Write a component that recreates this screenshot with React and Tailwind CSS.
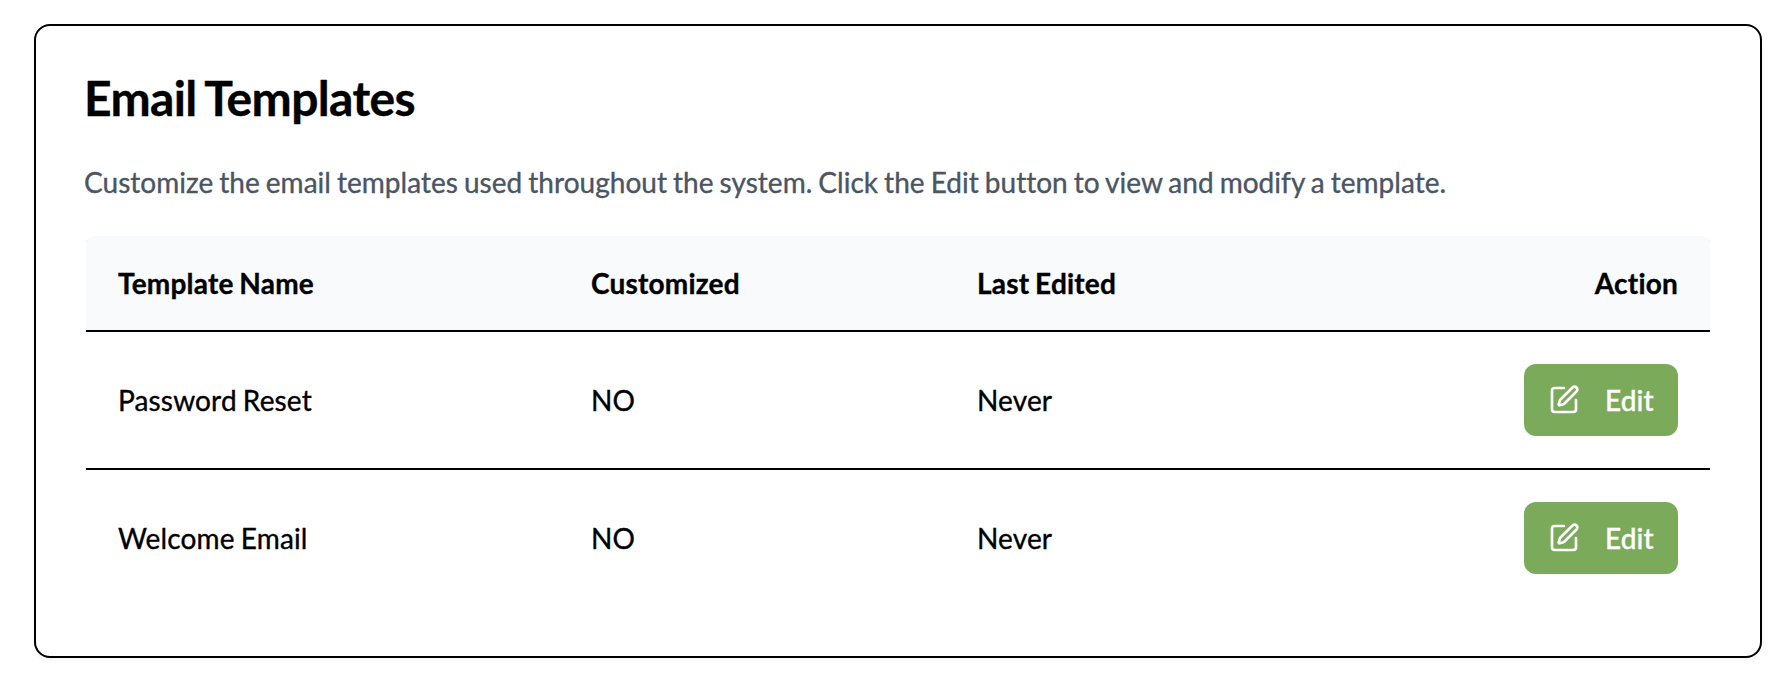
import { SquarePen } from "lucide-react";

const templates = [
  { name: "Password Reset", customized: "NO", edited: "Never" },
  { name: "Welcome Email", customized: "NO", edited: "Never" },
];

function EditButton() {
  return (
    <button className="inline-flex h-[72px] w-[154px] items-center rounded-xl bg-[#7bab5a] pl-6 text-[28px] font-medium text-white">
      <SquarePen size={32} strokeWidth={2} className="mr-[25px]" />
      Edit
    </button>
  );
}

export default function App() {
  return (
    <div className="h-[680px] bg-white pt-6 pl-[34px] font-['Lato',sans-serif] text-black [-webkit-text-stroke:0.35px_currentColor] [font-variant-ligatures:none]">
      <section className="h-[634px] w-[1728px] rounded-2xl border-2 border-black px-12 pt-12 shadow-[0_2px_4px_rgba(0,0,0,0.05)]">
        <h1 className="text-[48px] leading-[48px] font-bold tracking-[-0.63px] [word-spacing:-2px]">Email Templates</h1>
        <p className="mt-10 text-[28px] leading-10 tracking-[0.03px] text-[#4b5563] [word-spacing:-1.2px]">
          Customize the email templates used throughout the system. Click the Edit button to view and modify a template.
        </p>
        <div className="mt-[34px] ml-0.5 w-[1624px] text-[28px] leading-10">
          <div className="flex h-24 items-center rounded-t-lg bg-[#f9fafc] px-8 pb-0.5 font-bold tracking-[0.2px] [word-spacing:-1.2px] shadow-[inset_0_-2px_0_#000]">
            <div className="w-[473px]">Template Name</div>
            <div className="w-[386px]">Customized</div>
            <div className="flex-1">Last Edited</div>
            <div>Action</div>
          </div>
          {templates.map((t) => (
            <div key={t.name} className="flex h-[138px] items-center border-b-2 border-black px-8 tracking-[0.15px] [word-spacing:-1.2px] last:h-[136px] last:border-b-0">
              <div className="w-[473px]">{t.name}</div>
              <div className="w-[386px]">{t.customized}</div>
              <div className="flex-1">{t.edited}</div>
              <EditButton />
            </div>
          ))}
        </div>
      </section>
    </div>
  );
}
